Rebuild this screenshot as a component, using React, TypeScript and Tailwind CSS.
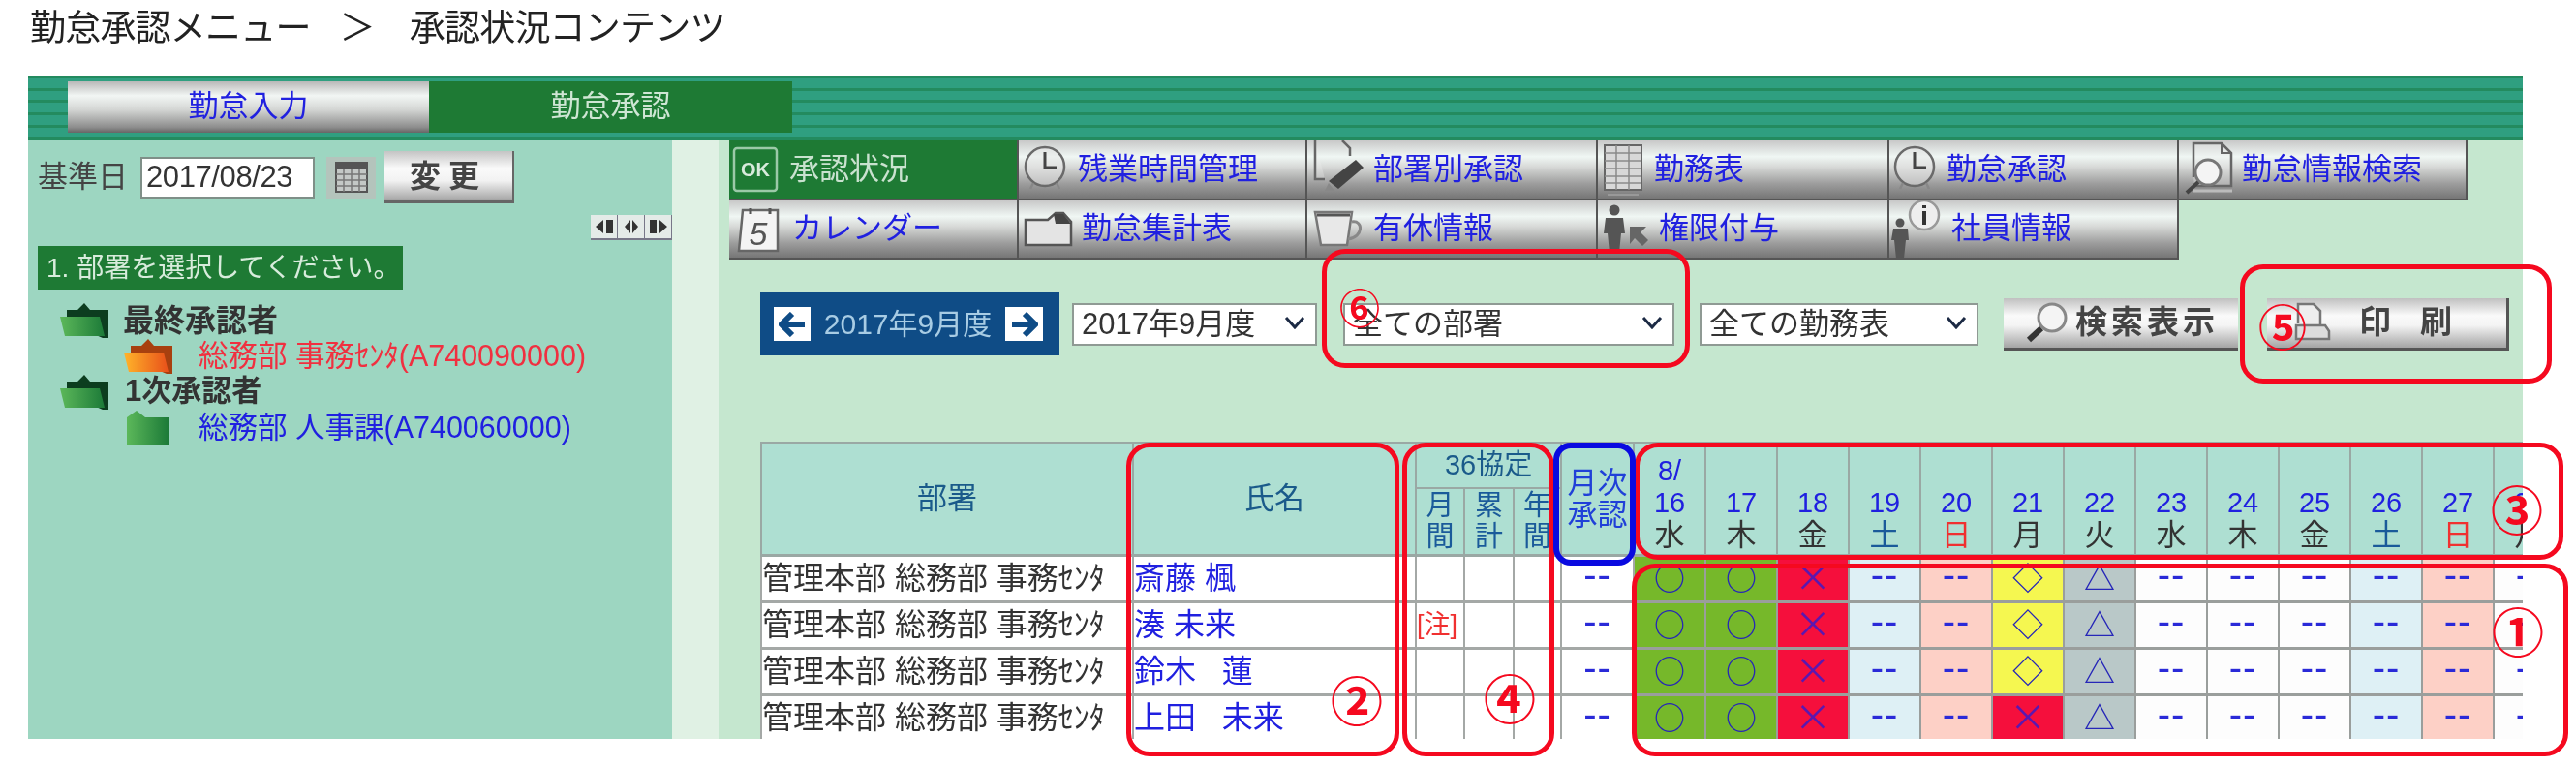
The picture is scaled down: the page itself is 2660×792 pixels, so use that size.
import React from "react";

const DAYS: [string, string][] = [
  ["16", "水"], ["17", "木"], ["18", "金"], ["19", "土"], ["20", "日"], ["21", "月"], ["22", "火"],
  ["23", "水"], ["24", "木"], ["25", "金"], ["26", "土"], ["27", "日"], ["28", "月"],
];

const C = {
  g: "bg-[#76b82a]", r: "bg-[#f50f3c]", b: "bg-[#def0f5]", p: "bg-[#fdd0c6]",
  y: "bg-[#f5f750]", s: "bg-[#b9c8c8]", w: "bg-[#fdfdfd]",
};
type CellT = [keyof typeof C, string];
const base: CellT[] = [
  ["g", "○"], ["g", "○"], ["r", "×"], ["b", "--"], ["p", "--"], ["y", "◇"], ["s", "△"],
  ["w", "--"], ["w", "--"], ["w", "--"], ["b", "--"], ["p", "--"], ["w", "--"],
];
const last: CellT[] = base.map((c, i) => (i === 5 ? (["r", "×"] as CellT) : c));

const ROWS = [
  { name: "斎藤 楓", note: false, cells: base },
  { name: "湊 未来", note: true, cells: base },
  { name: "鈴木\u00a0\u00a0\u00a0蓮", note: false, cells: base },
  { name: "上田\u00a0\u00a0\u00a0未来", note: false, cells: last },
];

const Clock = () => (
  <svg width="48" height="60" viewBox="0 0 48 60" className="shrink-0">
    <circle cx="24" cy="27" r="20" fill="#e8e8e8" fillOpacity="0.5" stroke="#6a6a6a" strokeWidth="2.5" />
    <path d="M24 12V28H36" fill="none" stroke="#444" strokeWidth="3" />
    <path d="M12 44l-3 6M36 44l3 6" stroke="#888" strokeWidth="2.5" />
  </svg>
);

const TabIcons: Record<string, React.ReactNode> = {
  ok: (
    <svg width="56" height="60" viewBox="0 0 56 60">
      <rect x="5" y="8" width="44" height="44" rx="3" fill="none" stroke="#9cc9a8" strokeWidth="2.5" />
      <text x="27" y="37" textAnchor="middle" fontSize="20" fontWeight="700" fill="#d8ebdc" fontFamily="Liberation Sans">OK</text>
    </svg>
  ),
  clock: <Clock />,
  pencil: (
    <svg width="62" height="60" viewBox="0 0 62 60">
      <path d="M8 0V40H18M36 0L44 8V16" fill="#eee" fillOpacity="0.3" stroke="#666" strokeWidth="2.5" />
      <path d="M50 20L58 28L32 50L22 42Z" fill="#444" />
      <path d="M22 44L18 52L28 52Z" fill="#888" />
    </svg>
  ),
  grid: (
    <svg width="52" height="60" viewBox="0 0 52 60">
      <rect x="7" y="5" width="38" height="46" fill="#d8d8d8" stroke="#666" strokeWidth="2" />
      <path d="M7 13H45M7 21H45M7 29H45M7 37H45M7 44H45M19 5V51M32 5V51" stroke="#8a8a8a" strokeWidth="1.5" />
      <path d="M10 56H42" stroke="#999" strokeWidth="2" />
    </svg>
  ),
  search: (
    <svg width="62" height="60" viewBox="0 0 62 60">
      <path d="M15 38V3H44L54 13V47H16" fill="#eee" fillOpacity="0.3" stroke="#666" strokeWidth="2.5" />
      <path d="M44 3V13H54" fill="none" stroke="#666" strokeWidth="2" />
      <circle cx="30" cy="33" r="13" fill="#f4f4f4" stroke="#777" strokeWidth="3" />
      <path d="M20 43L8 54" stroke="#444" strokeWidth="4" />
      <path d="M14 52H55" stroke="#bbb" strokeWidth="3" />
    </svg>
  ),
  cal: (
    <svg width="62" height="60" viewBox="0 0 62 60">
      <path d="M14 10H50V52H10Z" fill="#f4f4f4" stroke="#666" strokeWidth="2.5" />
      <path d="M22 8V14M42 8V14" stroke="#555" strokeWidth="3" />
      <text x="30" y="46" textAnchor="middle" fontSize="34" fontStyle="italic" fill="#555" fontFamily="Liberation Sans">5</text>
    </svg>
  ),
  folder: (
    <svg width="62" height="60" viewBox="0 0 62 60">
      <path d="M7 20H30L38 13H46L54 22V46H7Z" fill="#e4e4e4" stroke="#555" strokeWidth="2.5" />
      <path d="M36 14H46L54 24H38Z" fill="#444" />
    </svg>
  ),
  cup: (
    <svg width="62" height="60" viewBox="0 0 62 60">
      <path d="M8 12H46L41 46H14Z" fill="#e8e8e8" stroke="#777" strokeWidth="2.5" />
      <path d="M10 15H44" stroke="#555" strokeWidth="3" />
      <path d="M46 22C58 20 58 38 42 40" fill="none" stroke="#888" strokeWidth="3" />
    </svg>
  ),
  key: (
    <svg width="54" height="60" viewBox="0 0 54 60">
      <circle cx="17" cy="10" r="5.5" fill="#555" />
      <path d="M8 18H26L28 34H24L22 54H12L10 34H6Z" fill="#555" />
      <path d="M33 27H50L44 33L52 41L46 47L38 39L33 45Z" fill="#666" />
    </svg>
  ),
  info: (
    <svg width="56" height="62" viewBox="0 0 56 62">
      <circle cx="11" cy="24" r="4.5" fill="#555" />
      <path d="M4 30H19L20 42H17L15 61H7L5 42H2Z" fill="#555" />
      <circle cx="36" cy="16" r="15" fill="#eee" stroke="#999" strokeWidth="2.5" />
      <path d="M36 6V9M36 12V26" stroke="#333" strokeWidth="4" />
    </svg>
  ),
};

const TABS = [
  [
    { t: "承認状況", i: "ok", w: "w-[62px]", active: true, right: "w-[299px]" },
    { t: "残業時間管理", i: "clock", w: "w-[61px] pl-[3px]", right: "w-[298px]" },
    { t: "部署別承認", i: "pencil", w: "w-[68px]", right: "w-[300px]" },
    { t: "勤務表", i: "grid", w: "w-[58px]", right: "w-[301px]" },
    { t: "勤怠承認", i: "clock", w: "w-[59px] pl-[2px]", right: "w-[299px]" },
    { t: "勤怠情報検索", i: "search", w: "w-[65px]", right: "w-[298px]" },
  ],
  [
    { t: "カレンダー", i: "cal", w: "w-[65px]", right: "w-[299px]" },
    { t: "勤怠集計表", i: "folder", w: "w-[65px]", right: "w-[298px]" },
    { t: "有休情報", i: "cup", w: "w-[68px]", right: "w-[300px]" },
    { t: "権限付与", i: "key", w: "w-[63px]", right: "w-[301px]" },
    { t: "社員情報", i: "info", w: "w-[64px]", right: "w-[299px]" },
  ],
];

const Folder = ({ kind }: { kind: "green" | "orange" | "closed" }) => {
  const id = `fold-${kind}`;
  const [a, b, back] =
    kind === "orange" ? ["#ffb42a", "#e8501a", "#a8400f"] : ["#5cb85a", "#1c7a38", "#0c3d1f"];
  if (kind === "closed")
    return (
      <svg width="43" height="36" viewBox="0 0 43 36" className="shrink-0">
        <defs>
          <linearGradient id={id} x1="0" x2="1">
            <stop offset="0" stopColor={a} />
            <stop offset="1" stopColor={b} />
          </linearGradient>
        </defs>
        <path d="M0 7L10 0L19 7H43V36H0Z" fill={`url(#${id})`} />
      </svg>
    );
  return (
    <svg width="51" height="36" viewBox="0 0 51 36" className="shrink-0">
      <defs>
        <linearGradient id={id} x1="0" x2="1">
          <stop offset="0" stopColor={a} />
          <stop offset="1" stopColor={b} />
        </linearGradient>
      </defs>
      <path d="M7 7H18L25 0L31 7H50V36H44L7 20Z" fill={back} />
      <path d="M0 14H41L46 34H5Z" fill={`url(#${id})`} />
    </svg>
  );
};

const Chevron = () => (
  <svg width="22" height="14" viewBox="0 0 22 14" className="absolute right-[12px] top-[13px] pointer-events-none">
    <path d="M2 2L11 12L20 2" fill="none" stroke="#1c2a44" strokeWidth="3" />
  </svg>
);

const Select = ({ w, value }: { w: string; value: string }) => (
  <label className={`relative block ${w} h-[44px] shrink-0`}>
    <select
      defaultValue={value}
      className="appearance-none w-full h-full bg-white border-2 border-[#8f9a94] pl-[8px] text-[31px] leading-[38px] text-[#333] outline-none"
    >
      <option>{value}</option>
    </select>
    <Chevron />
  </label>
);

const Ann = ({ cls }: { cls: string }) => (
  <div className={`absolute border-[5px] border-[#f5091f] rounded-[24px] pointer-events-none ${cls}`} />
);

const Num = ({ t, cls }: { t: string; cls: string }) => (
  <span className={`absolute font-bold text-[#f5091f] leading-none [font-family:'Noto_Sans_CJK_JP',sans-serif] ${cls}`}>{t}</span>
);

const Mark = ({ s }: { s: string }) =>
  s === "--" ? (
    <span className="text-[40px] leading-[36px] tracking-[1px] text-[#2a2ad8] relative -top-[2px]">--</span>
  ) : (
    <span className={`leading-[36px] [font-family:'Noto_Sans_CJK_JP',sans-serif] ${s === "×" ? "text-[38px] text-[#5a18b0]" : "text-[32px] font-medium text-[#2626b8]"}`}>{s}</span>
  );

export default function App() {
  return (
    <div className="relative w-[2660px] h-[792px] bg-white overflow-hidden [font-family:'Liberation_Sans','Noto_Sans_CJK_JP',sans-serif] text-[#333] blur-[0.6px]">
      {/* page title */}
      <div className="h-[78px] pl-[31px] pt-[8px] flex items-start gap-[30px] text-[37px] leading-[44px] tracking-[-0.8px] text-[#222]">
        <span>勤怠承認メニュー</span>
        <span>＞</span>
        <span className="ml-[6px]">承認状況コンテンツ</span>
      </div>

      <div className="ml-[29px] w-[2576px]">
        {/* top tab bar */}
        <div className="h-[67px] pt-[6px] bg-[repeating-linear-gradient(180deg,#238b5f_0px,#238b5f_3px,#2f9f80_3px,#2f9f80_12.7px)]">
          <div className="flex ml-[41px] h-[53px]">
            <div className="w-[373px] flex items-center justify-center text-[31px] text-[#2020e0] bg-[linear-gradient(180deg,#b8b8b8_0%,#f2f6f4_28%,#d4d6d4_55%,#8c8c8c_90%,#666_100%)]">勤怠入力</div>
            <div className="w-[375px] flex items-center justify-center text-[31px] text-[#cfe6d4] bg-[#1e7a34]">勤怠承認</div>
          </div>
        </div>

        <div className="flex h-[618px]">
          {/* sidebar */}
          <aside className="w-[665px] bg-[#9dd6c1] pl-[10px] shrink-0">
            <div className="flex items-center mt-[11px] h-[54px]">
              <span className="w-[106px] text-[31px] text-[#444]">基準日</span>
              <input
                readOnly
                value="2017/08/23"
                className="w-[180px] h-[43px] bg-white border-2 border-[#7f8f88] px-[4px] text-[31px] tracking-[-0.4px] text-[#333] outline-none"
              />
              <div className="ml-[12px] w-[51px] h-[43px] bg-[#b4c4bc] flex items-center justify-center">
                <svg width="34" height="32" viewBox="0 0 34 32">
                  <rect x="1" y="1" width="32" height="30" fill="#c4c8c6" stroke="#555" strokeWidth="2" />
                  <rect x="1" y="1" width="32" height="6" fill="#555" />
                  <path d="M1 13H33M1 19H33M1 25H33M9 7V31M17 7V31M25 7V31" stroke="#777" strokeWidth="1.5" />
                </svg>
              </div>
              <button className="ml-[9px] w-[134px] h-[54px] text-[32px] font-bold text-[#444] tracking-[8px] border-b-[3px] border-r-2 border-[#666] bg-[linear-gradient(180deg,#c4c4c4_0%,#fafafa_35%,#f2f2f2_60%,#a4a4a4_100%)]">変更</button>
            </div>
            <div className="mt-[12px] h-[26px] flex justify-end">
              {["M4 13L12 6V20ZM15 6H22V20H15Z", "M6 13L12 6V20ZM20 13L14 6V20Z", "M4 6H11V20H4ZM14 6L22 13L14 20Z"].map((d) => (
                <div key={d} className="w-[28px] h-[26px] bg-[#e4ebe8] border-b-2 border-r border-[#778] flex items-center justify-center">
                  <svg width="26" height="26" viewBox="0 0 26 26"><path d={d} fill="#333" /></svg>
                </div>
              ))}
            </div>
            <div className="mt-[6px] w-[377px] h-[45px] bg-[#1e7a34] text-[#d8ecdc] text-[28px] leading-[45px] pl-[9px] whitespace-nowrap">1. 部署を選択してください。</div>

            <div className="mt-[13px] ml-[23px]">
              <div className="flex items-center h-[37px] gap-[14px]">
                <Folder kind="green" />
                <span className="text-[32px] font-bold text-[#333]">最終承認者</span>
              </div>
              <div className="flex items-center h-[37px] pl-[66px] gap-[26px]">
                <Folder kind="orange" />
                <span className="text-[30.5px] text-[#f03040]">総務部 事務ｾﾝﾀ(A740090000)</span>
              </div>
              <div className="flex items-center h-[37px] gap-[16px]">
                <Folder kind="green" />
                <span className="text-[31px] font-bold text-[#333]">1次承認者</span>
              </div>
              <div className="flex items-center h-[37px] pl-[69px] gap-[31px]">
                <Folder kind="closed" />
                <span className="text-[30.5px] text-[#2020e0]">総務部 人事課(A740060000)</span>
              </div>
            </div>
          </aside>

          <div className="w-[48px] shrink-0 bg-[#e0f1e4]" />

          {/* main */}
          <main className="w-[1863px] bg-[#c5e7cf] overflow-hidden">
            <div className="ml-[11px] flex flex-col">
              {TABS.map((row, ri) => (
                <div key={ri} className={`flex ${ri === 0 ? "h-[62px]" : "h-[61px]"}`}>
                  {row.map((tab: any) => (
                    <div
                      key={tab.t}
                      className={`${tab.right} flex items-center text-[31px] border-r-2 border-b-2 border-[#555] overflow-hidden ${
                        tab.active
                          ? "bg-[#1e7a34] text-[#c9e2cf]"
                          : "text-[#2020e0] bg-[linear-gradient(180deg,#c8c8c8_0%,#f0f7f4_28%,#d8dad8_45%,#9c9c9c_75%,#767676_100%)]"
                      }`}
                    >
                      <span className={`${tab.w} shrink-0 flex items-center`}>{TabIcons[tab.i]}</span>
                      <span className="whitespace-nowrap">{tab.t}</span>
                    </div>
                  ))}
                </div>
              ))}
            </div>

            {/* toolbar */}
            <div className="ml-[43px] mt-[34px] h-[65px] flex items-center">
              <div className="w-[309px] h-[65px] bg-[#0f4c86] flex items-center justify-between pl-[14px] pr-[17px] shrink-0">
                <span className="w-[38px] h-[35px] bg-white flex items-center justify-center">
                  <svg width="28" height="26" viewBox="0 0 28 26"><path d="M14 2L3 13L14 24M4 13H27" fill="none" stroke="#0f4c86" strokeWidth="6" /></svg>
                </span>
                <span className="text-[30px] text-[#a8cce4] whitespace-nowrap">2017年9月度</span>
                <span className="w-[39px] h-[35px] bg-white flex items-center justify-center">
                  <svg width="28" height="26" viewBox="0 0 28 26"><path d="M14 2L25 13L14 24M1 13H24" fill="none" stroke="#0f4c86" strokeWidth="6" /></svg>
                </span>
              </div>
              <div className="ml-[13px]"><Select w="w-[253px]" value="2017年9月度" /></div>
              <div className="ml-[27px]"><Select w="w-[342px]" value="全ての部署" /></div>
              <div className="ml-[26px]"><Select w="w-[288px]" value="全ての勤務表" /></div>
              <button className="ml-[26px] w-[242px] h-[54px] shrink-0 flex items-center pl-[22px] text-[33px] font-semibold text-[#444] tracking-[4px] border-b-[3px] border-[#555] bg-[linear-gradient(180deg,#c0c0c0_0%,#fafafa_35%,#f4f4f4_55%,#a4a4a4_100%)]">
                <svg width="46" height="42" viewBox="0 0 46 42" className="shrink-0 mr-[6px]">
                  <circle cx="28" cy="16" r="14" fill="#f4f4f4" stroke="#888" strokeWidth="3" />
                  <path d="M17 27L4 39" stroke="#333" strokeWidth="6" />
                </svg>
                検索表示
              </button>
              <button className="ml-[30px] w-[250px] h-[54px] shrink-0 flex items-center pl-[28px] text-[33px] font-semibold text-[#444] border-b-[3px] border-r-[3px] border-[#555] bg-[linear-gradient(180deg,#c0c0c0_0%,#fafafa_35%,#f4f4f4_55%,#a4a4a4_100%)]">
                <svg width="38" height="42" viewBox="0 0 38 42" className="shrink-0 mr-[29px]">
                  <path d="M4 22V2H20L27 9V26" fill="#eee" stroke="#777" strokeWidth="2.5" />
                  <path d="M2 24H32L36 30V38H2Z" fill="#ddd" stroke="#777" strokeWidth="2.5" />
                </svg>
                <span className="tracking-[30px]">印刷</span>
              </button>
            </div>

            {/* table */}
            <div className="ml-[43px] mt-[89px] w-[1820px] h-[307px] overflow-hidden">
              <table className="table-fixed border-collapse w-[1863px] text-[31px]">
                <colgroup>
                  <col className="w-[384px]" />
                  <col className="w-[292px]" />
                  <col className="w-[50px]" />
                  <col className="w-[51px]" />
                  <col className="w-[49px]" />
                  <col className="w-[75px]" />
                  {DAYS.map((d) => <col key={d[0]} className="w-[74px]" />)}
                </colgroup>
                <thead className="bg-[#aedfd2]">
                  <tr className="h-[47px]">
                    <th rowSpan={2} className="font-normal text-[#1a5a8a] border-2 border-b-[3px] border-[#9aa8a4]">部署</th>
                    <th rowSpan={2} className="font-normal text-[#1a5a8a] border-2 border-b-[3px] border-[#9aa8a4]">氏名</th>
                    <th colSpan={3} className="font-normal text-[#1a5a8a] text-[29px] border-2 border-[#9aa8a4]">36協定</th>
                    <th rowSpan={2} className="font-normal text-[#2040d8] leading-[33px] border-2 border-b-[3px] border-[#9aa8a4]">月次<br />承認</th>
                    {DAYS.map(([d, w], i) => (
                      <th key={d} rowSpan={2} className="font-normal align-bottom leading-[33px] pb-[2px] text-[#2020e0] text-[29px] border-2 border-b-[3px] border-[#9aa8a4] whitespace-nowrap">
                        {i === 0 && <>8/<br /></>}
                        {d}
                        <br />
                        <span className={`text-[31px] ${w === "日" ? "text-[#f03030]" : w === "土" ? "text-[#1a5a9a]" : "text-[#333]"}`}>{w}</span>
                      </th>
                    ))}
                  </tr>
                  <tr className="h-[69px]">
                    {["月間", "累計", "年間"].map((t) => (
                      <th key={t} className="font-normal text-[#1a5a9a] text-[29px] leading-[32px] border-2 border-b-[3px] border-[#9aa8a4]">
                        {t[0]}<br />{t[1]}
                      </th>
                    ))}
                  </tr>
                </thead>
                <tbody className="leading-[36px]">
                  {ROWS.map((r) => (
                    <tr key={r.name} className="h-[48px] bg-white">
                      <td className="border-2 border-b-[3px] border-[#a4a8a6] whitespace-nowrap text-[32px] text-[#333]">管理本部 総務部 事務ｾﾝﾀ</td>
                      <td className="border-2 border-b-[3px] border-[#a4a8a6] whitespace-nowrap text-[32px] text-[#2020e0]">{r.name}</td>
                      <td className="border-2 border-b-[3px] border-[#a4a8a6] whitespace-nowrap text-[27px] text-[#f03030]">{r.note ? "[注]" : ""}</td>
                      <td className="border-2 border-b-[3px] border-[#a4a8a6]" />
                      <td className="border-2 border-b-[3px] border-[#a4a8a6]" />
                      <td className="border-2 border-b-[3px] border-[#a4a8a6] text-center"><Mark s="--" /></td>
                      {r.cells.map(([c, s], i) => (
                        <td key={i} className={`border-2 border-b-[3px] border-[#9a9e9c] text-center whitespace-nowrap ${C[c]}`}><Mark s={s} /></td>
                      ))}
                    </tr>
                  ))}
                </tbody>
              </table>
            </div>
          </main>
        </div>
      </div>

      {/* red and blue annotations drawn over the page */}
      <Ann cls="left-[1365px] top-[257px] w-[380px] h-[123px]" />
      <Ann cls="left-[2313px] top-[273px] w-[322px] h-[123px]" />
      <Ann cls="left-[1163px] top-[457px] w-[282px] h-[324px]" />
      <Ann cls="left-[1448px] top-[457px] w-[157px] h-[324px]" />
      <Ann cls="left-[1688px] top-[457px] w-[959px] h-[121px]" />
      <Ann cls="left-[1685px] top-[582px] w-[967px] h-[199px]" />
      <div className="absolute left-[1604px] top-[457px] w-[85px] h-[127px] border-[6px] border-[#0a0ae0] rounded-[18px] pointer-events-none" />
      <Num t="⑥" cls="left-[1383px] top-[295px] text-[42px]" />
      <Num t="⑤" cls="left-[2332px] top-[310px] text-[50px]" />
      <Num t="②" cls="left-[1374px] top-[695px] text-[54px]" />
      <Num t="④" cls="left-[1532px] top-[693px] text-[54px]" />
      <Num t="③" cls="left-[2572px] top-[498px] text-[54px]" />
      <Num t="①" cls="left-[2573px] top-[624px] text-[54px]" />
    </div>
  );
}
